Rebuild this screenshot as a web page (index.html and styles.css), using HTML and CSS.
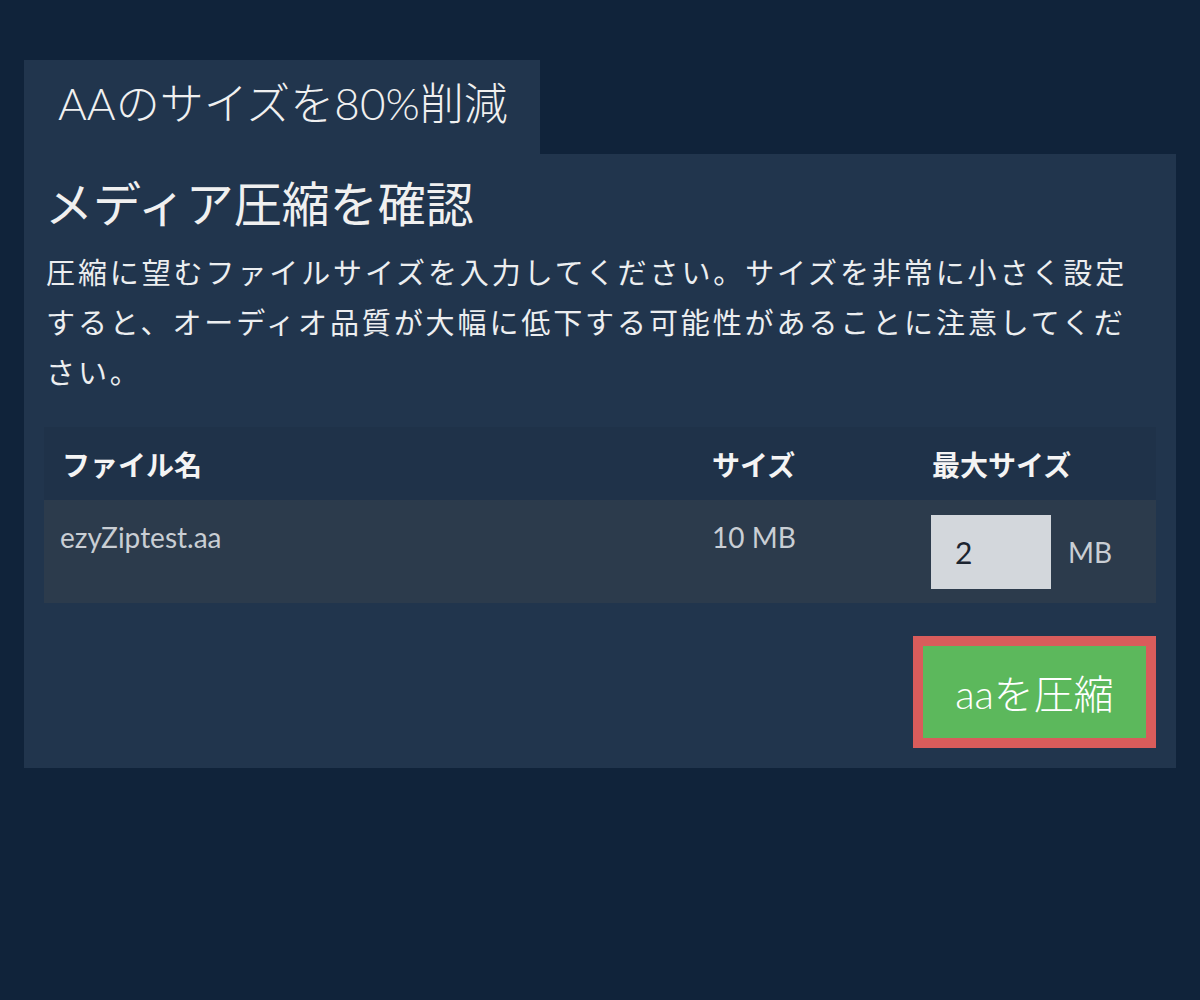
FILE: index.html
```html
<!DOCTYPE html>
<html lang="ja">
<head>
<meta charset="utf-8">
<title>メディア圧縮を確認</title>
<link rel="stylesheet" href="styles.css">
</head>
<body>
<div class="page">
  <div class="tab">AAのサイズを80%削減</div>
  <div class="panel">
    <h1 class="title">メディア圧縮を確認</h1>
    <p class="desc">圧縮に望むファイルサイズを入力してください。サイズを非常に小さく設定すると、オーディオ品質が大幅に低下する可能性があることに注意してください。</p>
    <table class="files">
      <thead>
        <tr>
          <th class="c-name">ファイル名</th>
          <th class="c-size">サイズ</th>
          <th class="c-max">最大サイズ</th>
        </tr>
      </thead>
      <tbody>
        <tr>
          <td class="c-name">ezyZiptest.aa</td>
          <td class="c-size">10 MB</td>
          <td class="c-max"><div class="max-wrap"><input class="max-input" type="text" value="2"><span class="unit">MB</span></div></td>
        </tr>
      </tbody>
    </table>
    <div class="actions">
      <button class="compress">aaを圧縮</button>
    </div>
  </div>
</div>
</body>
</html>
```
FILE: styles.css
```css
* { box-sizing: border-box; }
html, body {
  margin: 0;
  padding: 0;
  background: #10233a;
  font-family: "Lato", "Noto Sans CJK JP", sans-serif;
  color: #e8eaed;
}
.page {
  padding: 60px 24px 0 24px;
}
.tab {
  display: inline-flex;
  align-items: center;
  width: 516px;
  height: 94px;
  padding: 0 0 12px 34px;
  background: #21354d;
  font-size: 44px;
  font-weight: 300;
  color: #f0f0f0;
}
.panel {
  background: #21354d;
  padding: 22px 20px 20px 20px;
}
.title {
  margin: 0 0 0 1px;
  font-size: 48px;
  font-weight: 400;
  line-height: 56px;
  color: #f0f0f0;
}
.desc {
  margin: 16px 14px 0 2px;
  font-size: 29px;
  line-height: 50px;
  letter-spacing: 2.9px;
  color: #eceef0;
}
.files {
  width: 100%;
  margin-top: 29px;
  border-collapse: collapse;
  table-layout: fixed;
}
.files th {
  background: #1f3249;
  height: 73px;
  padding: 0 18px;
  text-align: left;
  font-size: 28px;
  font-weight: 700;
  color: #f4f4f4;
}
.files td {
  background: #2c3b4c;
  height: 103px;
  padding: 20px 16px 0 16px;
  vertical-align: top;
  font-size: 28px;
  color: #c9ced4;
}
.files .c-name { width: 650px; }
.files .c-size { width: 220px; }
.files td.c-size { padding-left: 18px; }
.files td.c-max { padding: 15px 18px 14px 18px; }
.max-wrap {
  display: flex;
  align-items: center;
  gap: 17px;
}
.max-input {
  width: 120px;
  height: 74px;
  margin-left: -1px;
  border: none;
  background: #d3d7dc;
  padding: 0 0 0 24px;
  font-family: "Lato", sans-serif;
  font-size: 30px;
  color: #1c2430;
}
.unit {
  font-size: 28px;
  color: #c9ced4;
}
.actions {
  display: flex;
  justify-content: flex-end;
  margin-top: 33px;
}
.compress {
  width: 243px;
  height: 112px;
  border: 10px solid #d95c5b;
  background: #5cb85c;
  color: #ffffff;
  font-family: "Lato", "Noto Sans CJK JP", sans-serif;
  font-size: 40px;
  font-weight: 300;
  padding: 0;
}
```
